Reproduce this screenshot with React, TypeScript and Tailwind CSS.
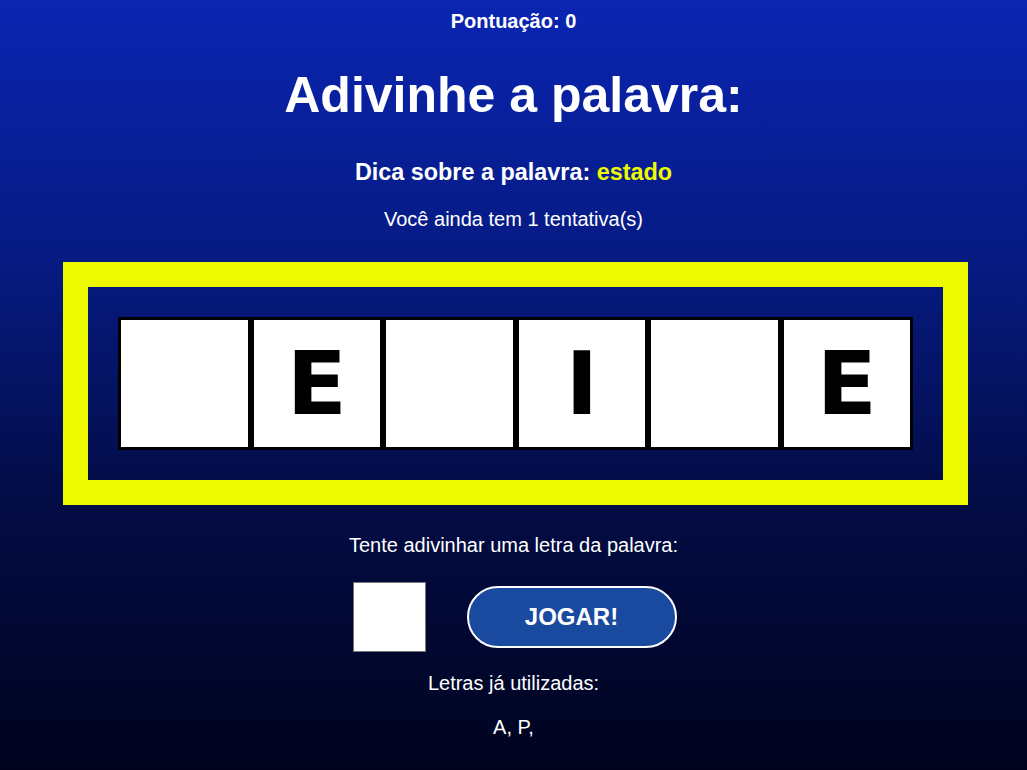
import React from "react";

const letters = ["", "E", "", "I", "", "E"];

export default function App() {
  return (
    <div
      className="w-full h-[770px] overflow-hidden text-white text-center"
      style={{ background: "linear-gradient(180deg, #0a25b2 0%, #061a80 35%, #030c45 65%, #00031e 100%)" }}
    >
      <div className="font-['Liberation_Sans',Arial,sans-serif] flex flex-col items-center">
        <p className="mt-[10px] text-[20px] leading-[23px] font-bold">Pontuação: 0</p>
        <h1 className="mt-[34px] text-[50px] leading-[57px] font-bold">Adivinhe a palavra:</h1>
        <p className="mt-[35px] text-[23.4px] leading-[27px] font-bold">
          Dica sobre a palavra: <span className="text-[#eefb00]">estado</span>
        </p>
        <p className="mt-[22px] text-[20px] leading-[23px]">Você ainda tem 1 tentativa(s)</p>
      </div>

      <div className="mt-[31px] ml-[63px] w-[905px] h-[243px] border-[25px] border-[#eefb00] p-[30px]">
        <div className="flex h-[133px]">
          {letters.map((l, i) => (
            <div
              key={i}
              className="flex-1 border-[3px] border-black bg-white flex items-center justify-center text-black font-bold text-[88px] leading-none font-['DejaVu_Sans',sans-serif]"
            >
              {l}
            </div>
          ))}
        </div>
      </div>

      <div className="font-['Liberation_Sans',Arial,sans-serif] flex flex-col items-center">
        <p className="mt-[29px] text-[20px] leading-[23px]">Tente adivinhar uma letra da palavra:</p>
        <div className="mt-[25px] flex items-center gap-[41px] ml-[2px]">
          <input
            type="text"
            className="w-[73px] h-[70px] bg-white border border-[#767676] text-black text-center text-[40px] outline-none"
          />
          <button className="w-[210px] h-[62px] rounded-full bg-[#1a4aa0] border-2 border-white text-white font-bold text-[24px]">
            JOGAR!
          </button>
        </div>
        <p className="mt-[20px] text-[20px] leading-[23px]">Letras já utilizadas:</p>
        <p className="mt-[21px] text-[20px] leading-[23px]">A, P,</p>
      </div>
    </div>
  );
}
